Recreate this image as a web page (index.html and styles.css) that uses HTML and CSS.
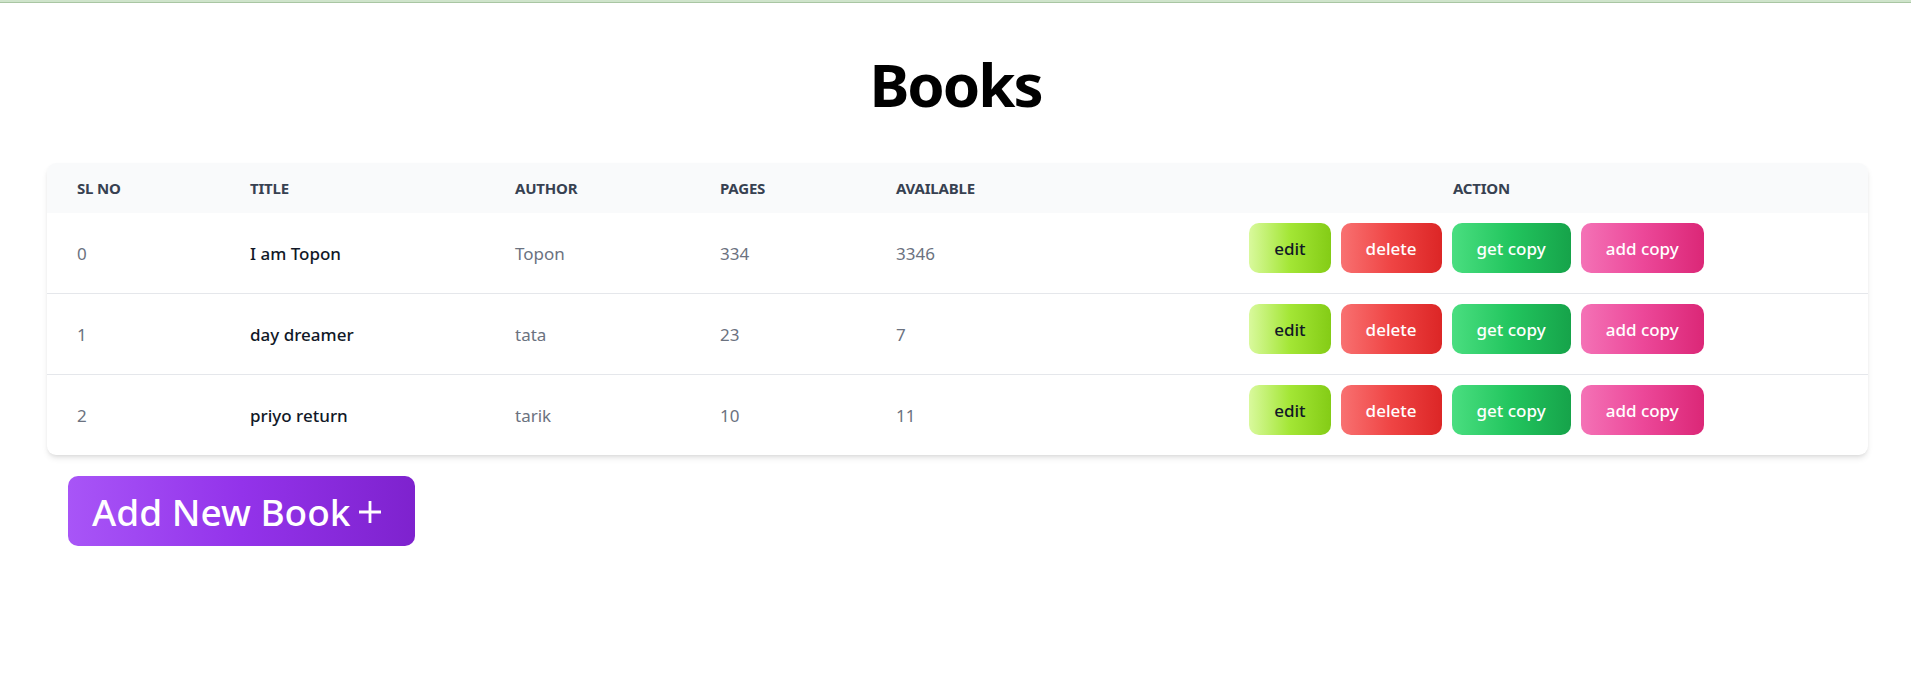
FILE: index.html
```html
<!DOCTYPE html>
<html lang="en">
<head>
<meta charset="utf-8">
<title>Books</title>
<link rel="stylesheet" href="styles.css">
</head>
<body>
<div class="topbar"></div>
<main class="page">
  <h1 class="heading">Books</h1>
  <div class="card">
    <table class="books">
      <colgroup>
        <col class="c-sl"><col class="c-title"><col class="c-author"><col class="c-pages"><col class="c-avail"><col class="c-action">
      </colgroup>
      <thead>
        <tr>
          <th>SL NO</th>
          <th>Title</th>
          <th>Author</th>
          <th>Pages</th>
          <th>Available</th>
          <th class="center">Action</th>
        </tr>
      </thead>
      <tbody>
        <tr>
          <td>0</td>
          <td class="title">I am Topon</td>
          <td>Topon</td>
          <td>334</td>
          <td>3346</td>
          <td><div class="actions"><button class="btn edit">edit</button><button class="btn delete">delete</button><button class="btn get">get copy</button><button class="btn add">add copy</button></div></td>
        </tr>
        <tr>
          <td>1</td>
          <td class="title">day dreamer</td>
          <td>tata</td>
          <td>23</td>
          <td>7</td>
          <td><div class="actions"><button class="btn edit">edit</button><button class="btn delete">delete</button><button class="btn get">get copy</button><button class="btn add">add copy</button></div></td>
        </tr>
        <tr>
          <td>2</td>
          <td class="title">priyo return</td>
          <td>tarik</td>
          <td>10</td>
          <td>11</td>
          <td><div class="actions"><button class="btn edit">edit</button><button class="btn delete">delete</button><button class="btn get">get copy</button><button class="btn add">add copy</button></div></td>
        </tr>
      </tbody>
    </table>
  </div>
  <button class="add-book">Add New Book<svg class="plus" viewBox="0 0 24 24" width="24" height="24" aria-hidden="true"><path d="M12 1v22M1 12h22" stroke="#fff" stroke-width="2.8" fill="none"/></svg></button>
</main>
</body>
</html>
```
FILE: styles.css
```css
* { box-sizing: border-box; }
html, body { margin: 0; padding: 0; background: #fff; }
body {
  font-family: "Noto Sans", "Open Sans", "Liberation Sans", sans-serif;
  color: #111827;
}
.topbar {
  height: 3px;
  background: #cfe4cb;
  border-bottom: 1px solid #a9c6a3;
}
.page {
  display: flex;
  flex-direction: column;
  align-items: flex-start;
}
.heading {
  align-self: stretch;
  margin: 51px 0 49px;
  text-align: center;
  font-size: 60px;
  line-height: 60px;
  font-weight: 700;
  color: #000;
  letter-spacing: -2px;
}
.card {
  align-self: stretch;
  margin: 0 43px 0 47px;
  border-radius: 9px;
  overflow: hidden;
  background: #fff;
  box-shadow: 0 4px 6px -1px rgba(0,0,0,0.1), 0 2px 4px -2px rgba(0,0,0,0.1);
}
.books {
  width: 100%;
  border-collapse: collapse;
  table-layout: fixed;
}
.c-sl { width: 173px; }
.c-title { width: 265px; }
.c-author { width: 205px; }
.c-pages { width: 176px; }
.c-avail { width: 229px; }
.c-action { width: auto; }
.books thead tr { background: #f9fafb; }
.books th {
  padding: 15px 30px;
  text-align: left;
  font-size: 15px;
  line-height: 20px;
  font-weight: 700;
  text-transform: uppercase;
  color: #374151;
  letter-spacing: -0.2px;
}
.books th.center { text-align: center; }
.books tbody tr { border-bottom: 1px solid #e5e7eb; }
.books tbody tr:last-child { border-bottom: none; }
.books td {
  padding: 10px 30px;
  font-size: 17px;
  line-height: 25px;
  color: #6b7280;
  vertical-align: middle;
  height: 80px;
}
.books td.title {
  color: #111827;
  font-weight: 500;
}
.actions {
  display: flex;
  justify-content: center;
}
.btn {
  height: 50px;
  margin: 0 10px 10px 0;
  padding: 0 25px;
  border: none;
  border-radius: 10px;
  font-family: inherit;
  font-size: 17px;
  font-weight: 500;
  line-height: 25px;
  color: #fff;
}
.btn.edit { background: linear-gradient(to right, #d9f99d, #a3e635, #84cc16); color: #111827; }
.btn.delete { background: linear-gradient(to right, #f87171, #ef4444, #dc2626); }
.btn.get { background: linear-gradient(to right, #4ade80, #22c55e, #16a34a); }
.btn.add { background: linear-gradient(to right, #f472b6, #ec4899, #db2777); }
.add-book {
  margin: 21px 0 0 68px;
  height: 70px;
  padding: 0 33px 0 24px;
  display: flex;
  align-items: center;
  border: none;
  border-radius: 10px;
  background: linear-gradient(to right, #a855f7, #9333ea, #7e22ce);
  color: #fff;
  font-family: inherit;
  font-size: 37px;
  font-weight: 500;
  line-height: 45px;
}
.plus {
  width: 24px;
  height: 24px;
  margin-left: 7px;
  margin-top: 2px;
}
```
